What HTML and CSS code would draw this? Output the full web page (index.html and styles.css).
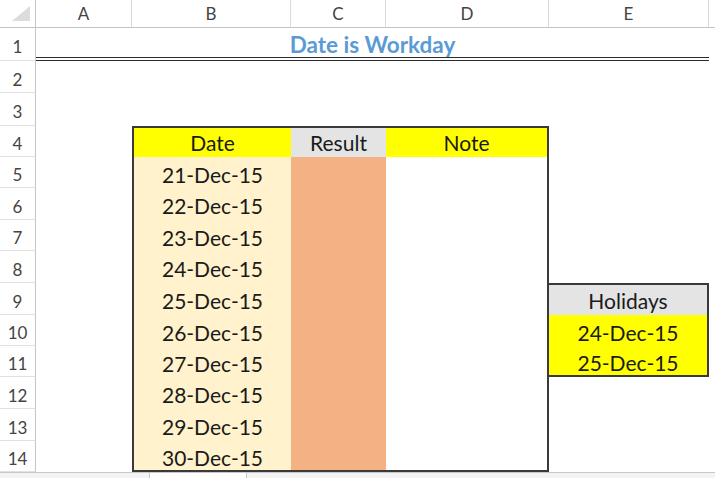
FILE: index.html
```html
<!DOCTYPE html>
<html>
<head>
<meta charset="utf-8">
<link rel="stylesheet" href="styles.css">
</head>
<body>
<div class="sheet">
  <div class="corner"></div>
  <div class="ch">A</div>
  <div class="ch">B</div>
  <div class="ch">C</div>
  <div class="ch">D</div>
  <div class="ch">E</div>
  <div class="ch ch-f"></div>

  <div class="rh">1</div>
  <div class="title">Date is Workday</div>
  <div class="cell"></div>

  <div class="rh">2</div>
  <div class="cell span6"></div>

  <div class="rh">3</div>
  <div class="cell span6"></div>

  <div class="rh">4</div>
  <div class="cell"></div>
  <div class="th yellow bt bl">Date</div>
  <div class="th grey bt">Result</div>
  <div class="th yellow bt br">Note</div>
  <div class="cell span2"></div>

  <div class="rh">5</div>
  <div class="cell"></div>
  <div class="date bl">21-Dec-15</div>
  <div class="res"></div>
  <div class="note br"></div>
  <div class="cell span2"></div>

  <div class="rh">6</div>
  <div class="cell"></div>
  <div class="date bl">22-Dec-15</div>
  <div class="res"></div>
  <div class="note br"></div>
  <div class="cell span2"></div>

  <div class="rh">7</div>
  <div class="cell"></div>
  <div class="date bl">23-Dec-15</div>
  <div class="res"></div>
  <div class="note br"></div>
  <div class="cell span2"></div>

  <div class="rh">8</div>
  <div class="cell"></div>
  <div class="date bl">24-Dec-15</div>
  <div class="res"></div>
  <div class="note br"></div>
  <div class="cell span2"></div>

  <div class="rh">9</div>
  <div class="cell"></div>
  <div class="date bl">25-Dec-15</div>
  <div class="res"></div>
  <div class="note br"></div>
  <div class="th grey bt br">Holidays</div>
  <div class="cell"></div>

  <div class="rh">10</div>
  <div class="cell"></div>
  <div class="date bl">26-Dec-15</div>
  <div class="res"></div>
  <div class="note br"></div>
  <div class="hol yellow br">24-Dec-15</div>
  <div class="cell"></div>

  <div class="rh">11</div>
  <div class="cell"></div>
  <div class="date bl">27-Dec-15</div>
  <div class="res"></div>
  <div class="note br"></div>
  <div class="hol yellow br bb">25-Dec-15</div>
  <div class="cell"></div>

  <div class="rh">12</div>
  <div class="cell"></div>
  <div class="date bl">28-Dec-15</div>
  <div class="res"></div>
  <div class="note br"></div>
  <div class="cell span2"></div>

  <div class="rh">13</div>
  <div class="cell"></div>
  <div class="date bl">29-Dec-15</div>
  <div class="res"></div>
  <div class="note br"></div>
  <div class="cell span2"></div>

  <div class="rh">14</div>
  <div class="cell"></div>
  <div class="date bl bb">30-Dec-15</div>
  <div class="res bb"></div>
  <div class="note br bb"></div>
  <div class="cell span2"></div>

  <div class="tabs">
    <div class="tab-gap"></div>
    <div class="tab"></div>
    <div class="tab-rest"></div>
  </div>
</div>
</body>
</html>
```

FILE: styles.css
```css
html, body {
  margin: 0;
  padding: 0;
  background: #ffffff;
}

body {
  width: 715px;
  height: 478px;
  overflow: hidden;
  font-family: Lato, "Liberation Sans", sans-serif;
}

.sheet {
  display: grid;
  grid-template-columns: 36px 96px 159px 95px 163px 160px 1fr;
  grid-template-rows: 28px 33px 32px 33px 31px 31px 32px 31px 32px 32px 31px 31px 32px 32px 31px 1fr;
  width: 715px;
  height: 478px;
}

.sheet > div {
  box-sizing: border-box;
  min-width: 0;
}

/* headers */
.corner {
  border-right: 1px solid #c4c4c4;
  border-bottom: 1px solid #c4c4c4;
  display: flex;
  justify-content: flex-end;
  align-items: flex-end;
  padding: 0 5px 6px 0;
}

.corner::after {
  content: "";
  width: 18px;
  height: 15px;
  background: #dcdcdc;
  clip-path: polygon(100% 0, 100% 100%, 0 100%);
}

.ch {
  border-right: 1px solid #dadada;
  border-bottom: 1px solid #c4c4c4;
  display: flex;
  align-items: center;
  justify-content: center;
  font-size: 17px;
  color: #444444;
}

.ch-f {
  border-right: none;
}

.rh {
  border-right: 1px solid #c4c4c4;
  border-bottom: 1px solid #e1e1e1;
  display: flex;
  align-items: center;
  justify-content: center;
  padding-top: 5px;
  font-size: 17px;
  color: #444444;
}

/* cells */
.span6 { grid-column: span 6; }
.span2 { grid-column: span 2; }

.title {
  grid-column: span 5;
  border-bottom: 4px double #2b2b2b;
  display: flex;
  align-items: center;
  justify-content: center;
  padding-top: 3px;
  font-weight: 700;
  font-size: 22.5px;
  color: #5b9bd5;
}

.th, .date, .hol {
  display: flex;
  align-items: center;
  justify-content: center;
  padding-top: 3px;
  font-size: 21px;
  color: #1a1a1a;
}

.th {
  padding-top: 0;
}

.yellow { background: #ffff00; }
.grey { background: #e4e4e4; }
.date { background: #fff2cc; }
.res { background: #f4b183; }
.note { background: #ffffff; }

.bt { border-top: 2px solid #3a3a3a; }
.bb { border-bottom: 2px solid #3a3a3a; }
.bl { border-left: 2px solid #3a3a3a; }
.br { border-right: 2px solid #3a3a3a; }

/* sheet tab strip */
.tabs {
  grid-column: 1 / -1;
  display: flex;
  border-top: 1px solid #c8c8c8;
  background: #f4f4f4;
}

.tab-gap {
  width: 149px;
  border-right: 1px solid #c8c8c8;
}

.tab {
  width: 96px;
  border-right: 1px solid #c8c8c8;
  background: #ffffff;
}

.tab-rest {
  flex: 1;
}
```
